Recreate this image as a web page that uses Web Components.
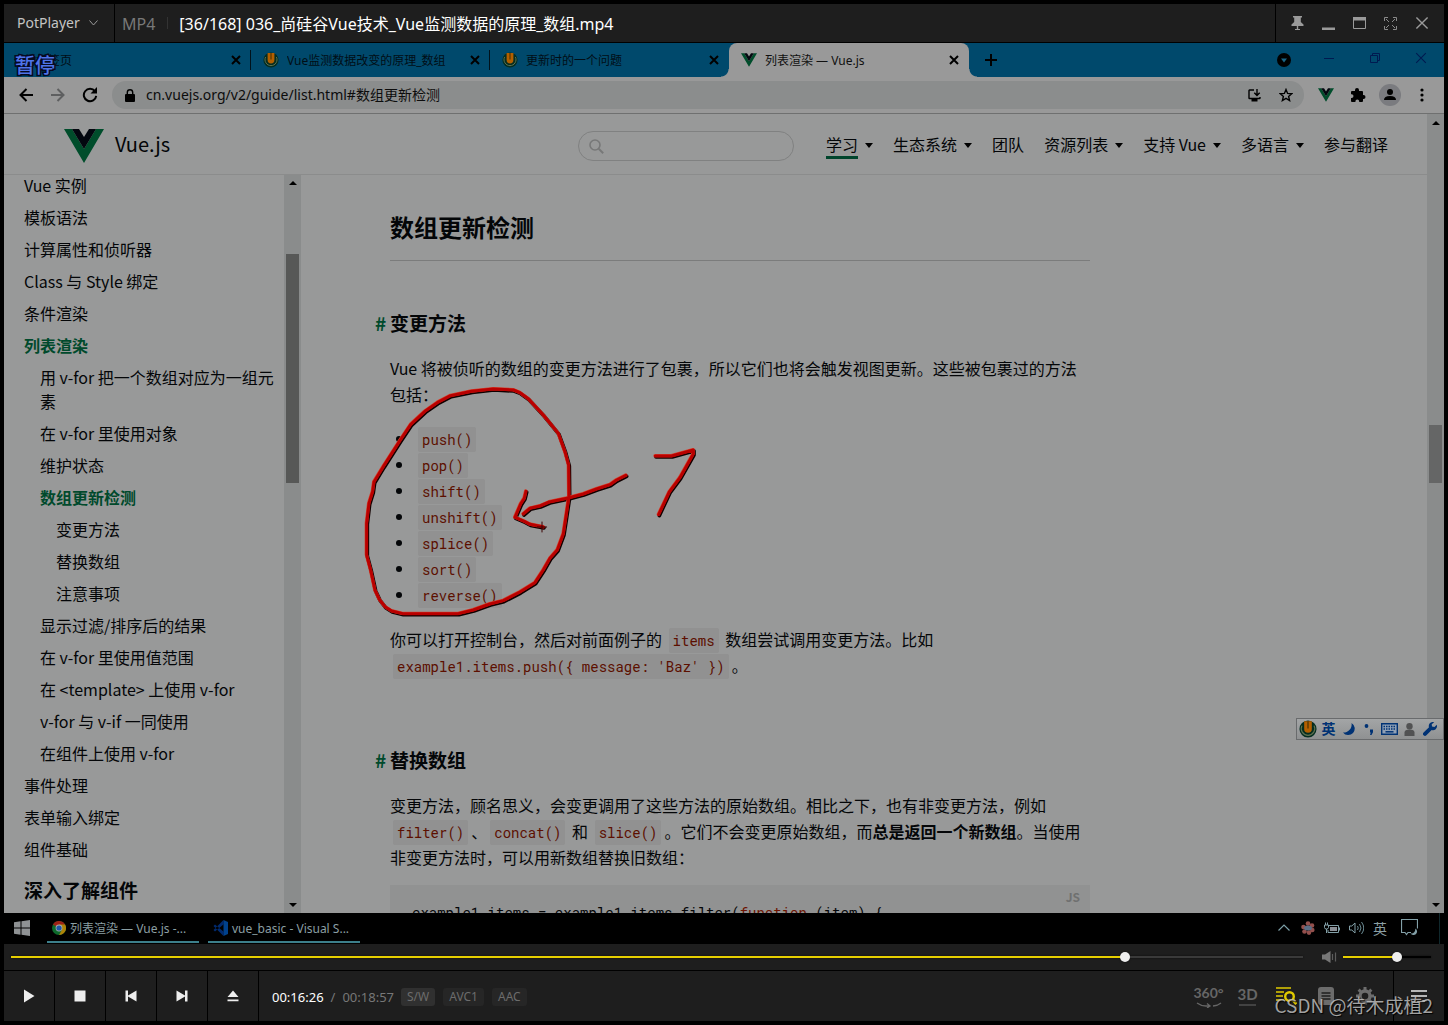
<!DOCTYPE html>
<html lang="zh-CN">
<head>
<meta charset="utf-8">
<title>PotPlayer</title>
<style>
  html, body { margin: 0; background: #000; }
  body { font-family: "Noto Sans CJK SC", sans-serif; }
</style>
</head>
<body>
<pot-window>
  <pot-titlebar slot="title" format="MP4">[36/168] 036_尚硅谷Vue技术_Vue监测数据的原理_数组.mp4</pot-titlebar>
  <browser-tabs>
    <browser-tab>新标签页</browser-tab>
    <browser-tab icon="u">Vue监测数据改变的原理_数组</browser-tab>
    <browser-tab icon="u">更新时的一个问题</browser-tab>
    <browser-tab icon="vue" active>列表渲染 — Vue.js</browser-tab>
  </browser-tabs>
  <browser-toolbar url="cn.vuejs.org/v2/guide/list.html#数组更新检测"></browser-toolbar>
  <vue-site></vue-site>
  <win-taskbar slot="taskbar">
    <task-button icon="chrome">列表渲染 — Vue.js -...</task-button>
    <task-button icon="code">vue_basic - Visual S...</task-button>
  </win-taskbar>
  <seek-bar slot="seek"></seek-bar>
  <player-controls slot="controls"></player-controls>
</pot-window>

<script>
const RESET = `
  *, *::before, *::after { box-sizing: border-box; }
  button { font: inherit; color: inherit; background: none; border: 0; padding: 0; margin: 0; display: flex; align-items: center; justify-content: center; }
  a { color: inherit; text-decoration: none; }
  input { font: inherit; color: inherit; background: none; border: 0; padding: 0; margin: 0; outline: 0; min-width: 0; }
  svg { display: block; flex: none; }
`;
const UI = '"Noto Sans", "Noto Sans CJK SC", sans-serif';

const svg = (w, h, body, box) =>
  `<svg width="${w}" height="${h}" viewBox="${box || `0 0 ${w} ${h}`}" aria-hidden="true">${body}</svg>`;

const ICON = {
  vue: (w, h) => svg(w, h, `<path fill="#004d2b" d="M0 0h8l12 20L32 0h8L20 34z"/><path fill="#03070f" d="M8 0h7l5 8 5-8h7L20 20z"/>`, '0 0 40 34'),
  u: (s) => svg(s, s, `<circle cx="8" cy="8" r="7.6" fill="#052d20"/><path d="M2.6 5a6 6 0 1 0 10.8 0" fill="none" stroke="#5d7250" stroke-width="1"/><path d="M4.6 1v7a3.4 3.4 0 0 0 6.8 0V1z" fill="#b35f00"/><path d="M8 1v6.5" stroke="#5c3a00" stroke-width="1.3"/>`, '0 0 16 16'),
  chrome: () => svg(14, 14, `<circle cx="7" cy="7" r="7" fill="#0d6a2c"/><path d="M7 7 .9 3.5A7 7 0 0 1 13.1 3.5z" fill="#9c2115"/><path d="M7 7V3.5h6.1A7 7 0 0 1 7 14l3-5.3z" fill="#ad8308"/><circle cx="7" cy="7" r="3.4" fill="#a9aaa9"/><circle cx="7" cy="7" r="2.6" fill="#1f57a8"/>`),
  code: () => svg(15, 16, `<path d="M10.5 0 15 2v12l-4.500 2z" fill="#00418c"/><path d="M11 4 2 11.5.5 10 10.5 0zM11 12 2 4.5.5 6l10 10z" fill="#002a6e"/>`),
  x: (s, c, w) => svg(s, s, `<path d="M1 1 9 9M9 1 1 9" stroke="${c}" stroke-width="${w}" fill="none"/>`, '0 0 10 10')
};

function define(name, css, html) {
  const template = document.createElement('template');
  customElements.define(name, class extends HTMLElement {
    constructor() {
      super();
      this.attachShadow({ mode: 'open' });
    }
    connectedCallback() {
      if (this.shadowRoot.childNodes.length) return;
      template.innerHTML = `<style>${RESET}${css}</style>${typeof html === 'function' ? html(this) : html}`;
      this.shadowRoot.append(template.content.cloneNode(true));
    }
  });
}

/* ---------- player shell ---------- */
define('pot-window', `
  :host { display: flex; flex-direction: column; height: 100vh; padding: 4px; box-sizing: border-box; background: #000; gap: 1px; }
  .screen { flex: 1; min-height: 0; display: flex; flex-direction: column; }
  .video { flex: 1; min-height: 0; display: flex; flex-direction: column; position: relative; overflow: hidden; background: #989898; }
  .osd { position: absolute; left: 11px; top: 9px; font-size: 20px; line-height: 26px; font-weight: 500; color: #4f74ea; -webkit-text-stroke: 3px #060a20; paint-order: stroke fill; }
`, `
  <slot name="title"></slot>
  <div class="screen">
    <div class="video"><slot></slot><div class="osd">暂停</div></div>
    <slot name="taskbar"></slot>
    <slot name="seek"></slot>
  </div>
  <slot name="controls"></slot>
`);

define('pot-titlebar', `
  :host { display: flex; height: 38px; background: #1e1e1e; font-family: ${UI}; color: #fff; }
  .brand { width: 111px; padding: 0 0 1px 13px; gap: 9px; justify-content: flex-start; border-right: 1px solid #000; color: #c4c4c4; font-size: 14px; }
  .format { padding: 2px 12px 0 7px; font-size: 16px; line-height: 36px; color: #787878; }
  .rule { width: 1px; height: 12px; background: #333; align-self: center; }
  .name { flex: 1; padding: 2px 0 0 11px; font-size: 16px; line-height: 36px; white-space: nowrap; overflow: hidden; }
  .controls { display: flex; border-left: 1px solid #000; padding: 0 7px 0 6px; }
  .controls button { width: 31px; }
`, el => `
  <button class="brand">PotPlayer ${svg(9, 6, '<path d="M.5.5 4.5 5l4-4.5" fill="none" stroke="#9a9a9a"/>')}</button>
  <span class="format">${el.getAttribute('format')}</span><span class="rule"></span>
  <span class="name"><slot></slot></span>
  <div class="controls">
    <button aria-label="pin">${svg(13, 14, '<path d="M2 0h9v1.500H9.800V6l2.700 2.500V10H.5V8.500L3.200 6V1.500H2zM5.800 10h1.400v3H9v1H4v-1h1.800z" fill="#9a9a9a"/>')}</button>
    <button aria-label="minimize">${svg(13, 14, '<path d="M0 11.5h13v2.500H0z" fill="#9a9a9a"/>')}</button>
    <button aria-label="maximize">${svg(13, 12, '<path d="M.5.5h12v11H.5z" fill="none" stroke="#9a9a9a"/><path d="M0 0h13v3.500H0z" fill="#9a9a9a"/>')}</button>
    <button aria-label="fullscreen">${svg(13, 13, '<path d="M.5 4V.5H4M9 .5h3.500V4M12.500 9v3.500H9M4 12.500H.5V9M2 2l3 3M11 2 8 5M11 11 8 8M2 11l3-3" fill="none" stroke="#8a8a8a"/>')}</button>
    <button aria-label="close">${ICON.x(14, '#9a9a9a', 1)}</button>
  </div>
`);

/* ---------- browser chrome ---------- */
define('browser-tabs', `
  :host { display: flex; align-items: stretch; height: 34px; padding-left: 8px; background: #00496c; font-family: ${UI}; flex: none; }
  .plus { width: 44px; }
  .fill { flex: 1; }
  .win { width: 46px; padding-bottom: 5px; }
  .more { width: 44px; }
`, `
  <slot></slot>
  <button class="plus" aria-label="new tab">${svg(12, 12, '<path d="M6 0v12M0 6h12" stroke="#000" stroke-width="2"/>')}</button>
  <span class="fill"></span>
  <button class="more" aria-label="search tabs">${svg(14, 14, '<circle cx="7" cy="7" r="7" fill="#000"/><path d="M4 5.500h6L7 9.500z" fill="#1a6688"/>')}</button>
  <button class="win" aria-label="minimize">${svg(10, 10, '<path d="M0 5.500h10" stroke="#001a50"/>')}</button>
  <button class="win" aria-label="restore">${svg(10, 10, '<path d="M.5 2.500h7v7h-7zM2.500 2.500v-2h7v7h-2" fill="none" stroke="#001a50"/>')}</button>
  <button class="win" aria-label="close">${ICON.x(12, '#001a50', 0.9)}</button>
`);

define('browser-tab', `
  :host { display: flex; align-items: center; gap: 8px; width: 239px; padding: 0 10px 0 12px; font-size: 12px; color: #000e16; position: relative; box-sizing: border-box; }
  :host(:not([active]))::after { content: ""; width: 1px; height: 20px; background: #00121c; position: absolute; right: 0; top: 7px; }
  :host(:nth-child(3))::after { display: none; }
  :host([active]) { background: #999; border-radius: 8px 8px 0 0; color: #101010; width: 240px; }
  :host([active])::before, :host([active])::after { content: ""; position: absolute; bottom: 0; width: 8px; height: 8px; right: 100%; top: auto; background: radial-gradient(circle at 0 0, #00496c 7px, #999 8px); }
  :host([active])::after { right: auto; left: 100%; background: radial-gradient(circle at 100% 0, #00496c 7px, #999 8px); }
  a { flex: 1; white-space: nowrap; overflow: hidden; line-height: 20px; padding-top: 2px; }
`, el => `
  ${el.getAttribute('icon') === 'vue' ? ICON.vue(16, 14) : el.getAttribute('icon') === 'u' ? ICON.u(16) : ''}
  <a href="#"><slot></slot></a>
  <button aria-label="close tab">${ICON.x(10, '#000', 2)}</button>
`);

define('browser-toolbar', `
  :host { display: flex; align-items: center; height: 37px; padding: 0 6px; background: #999; border-bottom: 1px solid #6f7070; font-family: ${UI}; flex: none; box-sizing: border-box; }
  .nav { width: 32px; height: 28px; }
  label { flex: 1; margin: 0 6px; display: flex; align-items: center; height: 28px; padding: 0 2px 0 13px; border-radius: 14px; background: #8b8d8d; gap: 11px; }
  label input { flex: 1; font-size: 14px; line-height: 20px; color: #0c0c0c; }
  label button { width: 32px; margin-left: -11px; height: 28px; }
  .avatar { width: 22px; height: 22px; border-radius: 11px; background: #7a7b7f; }
`, el => `
  <button class="nav" aria-label="back">${svg(14, 14, '<path d="M14 7H1.500M7.500 1l-6 6 6 6" fill="none" stroke="#000" stroke-width="2"/>')}</button>
  <button class="nav" aria-label="forward">${svg(14, 14, '<path d="M0 7h12.500M6.500 1l6 6-6 6" fill="none" stroke="#5e5f60" stroke-width="2"/>')}</button>
  <button class="nav" aria-label="reload">${svg(16, 16, '<path d="M13 4.300A6.200 6.200 0 1 0 14.200 8.800" fill="none" stroke="#000" stroke-width="2"/><path d="M15 0v6.500H8.500z"/>')}</button>
  <label>${svg(10, 13, '<path d="M1 5h8q1 0 1 1v6q0 1-1 1H1q-1 0-1-1V6q0-1 1-1z"/><path d="M2.300 5.500V3.500a2.700 2.700 0 0 1 5.400 0v2" fill="none" stroke="#000" stroke-width="1.400"/>')}
    <input aria-label="address" value="${el.getAttribute('url')}">
    <button aria-label="install">${svg(13, 13, '<path d="M6 1H1.500Q1 1 1 1.500v7.500q0 .5.5.5h10q.5 0 .5-.5V8M9 0v6M6.300 3.800 9 6.500l2.700-2.700" fill="none" stroke="#000" stroke-width="1.400"/><path d="M3.500 10h6v2.500h-6z"/>')}</button>
    <button aria-label="bookmark">${svg(14, 14, '<path d="m7 1.500 1.600 3.900 4.200.3-3.200 2.700 1 4.100L7 10.300l-3.600 2.200 1-4.100L1.200 5.700l4.200-.3z" fill="none" stroke="#000" stroke-width="1.400"/>')}</button>
  </label>
  <button class="nav" aria-label="Vue devtools">${ICON.vue(16, 14)}</button>
  <button class="nav" aria-label="extensions">${svg(16, 16, '<path d="M1 5q0-1 1-1h3V3a2 2 0 0 1 4 0v1h3q1 0 1 1v3h.5a2 2 0 0 1 0 4H13v2q0 1-1 1H9.200v-.6a1.900 1.900 0 0 0-3.800 0v.6H2q-1 0-1-1v-3h.6a1.900 1.900 0 0 0 0-3.800H1z"/>')}</button>
  <button class="nav" aria-label="profile"><span class="avatar">${svg(22, 22, '<circle cx="11" cy="8" r="3"/><path d="M5 16q0-4 6-4t6 4z"/>')}</span></button>
  <button class="nav" aria-label="menu">${svg(4, 14, '<circle cx="2" cy="2" r="1.600"/><circle cx="2" cy="7" r="1.600"/><circle cx="2" cy="12" r="1.600"/>')}</button>
`);

/* ---------- web page ---------- */
define('scroll-bar', `
  :host { display: flex; flex-direction: column; align-items: center; width: 17px; flex: none; background: #8a8c8c; }
  span { height: 17px; display: flex; align-items: center; }
  .track { flex: 1; align-self: stretch; display: flex; flex-direction: column; padding: 0 2px; }
  .before { flex: var(--before); } .thumb { flex: var(--thumb); background: var(--thumb-color, #575857); } .after { flex: var(--after); }
`, `
  <span>${svg(8, 4, '<path d="M0 4h8L4 0z"/>')}</span>
  <div class="track"><i class="before"></i><i class="thumb"></i><i class="after"></i></div>
  <span>${svg(8, 4, '<path d="M0 0h8L4 4z"/>')}</span>
`);

define('vue-site', `
  :host { flex: 1; min-height: 0; display: flex; position: relative; background: #989999; color: #040608; }
  .page { flex: 1; min-width: 0; display: flex; flex-direction: column; }
  .body { flex: 1; min-height: 0; display: flex; }
  .outer { --before: 294; --thumb: 58; --after: 413; --thumb-color: #656666; }
  .inner { --before: 63; --thumb: 229; --after: 413; }
`, `
  <div class="page">
    <vue-header></vue-header>
    <div class="body"><vue-sidebar></vue-sidebar><scroll-bar class="inner"></scroll-bar><vue-article></vue-article></div>
  </div>
  <scroll-bar class="outer"></scroll-bar>
  <ink-layer></ink-layer>
  <ime-bar></ime-bar>
`);

define('vue-header', `
  :host { display: flex; align-items: center; height: 60px; padding: 0 39px 0 60px; box-shadow: 0 1px #8b8c8c; flex: none; z-index: 1; }
  .logo { display: flex; align-items: center; gap: 11px; font-size: 20px; line-height: 32px; padding-top: 4px; }
  .logo span { padding-bottom: 4px; }
  .fill { flex: 1; }
  label { display: flex; align-items: center; width: 216px; height: 30px; margin: 4px 32px 0 0; padding: 0 12px 0 10px; gap: 8px; border: 1px solid #808181; border-radius: 15px; }
  label input { flex: 1; font-size: 14px; }
  nav { display: flex; gap: 20px; }
`, `
  <a class="logo" href="#">${ICON.vue(40, 34)}<span>Vue.js</span></a>
  <span class="fill"></span>
  <label>${svg(15, 15, '<circle cx="6" cy="6" r="5" fill="none" stroke="#777878" stroke-width="1.600"/><path d="m9.700 9.700 4.500 4.500" stroke="#777878" stroke-width="2"/>')}<input type="search" aria-label="search"></label>
  <nav>
    <nav-item current menu>学习</nav-item><nav-item menu>生态系统</nav-item><nav-item>团队</nav-item>
    <nav-item menu>资源列表</nav-item><nav-item menu>支持 Vue</nav-item><nav-item menu>多语言</nav-item><nav-item>参与翻译</nav-item>
  </nav>
`);

define('nav-item', `
  :host { display: block; font-size: 16px; line-height: 24px; white-space: nowrap; }
  a { display: flex; align-items: center; gap: 7px; }
  span { padding: 2px 0 0; border-bottom: 3px solid transparent; }
  :host([current]) span { border-color: #00452c; }
  svg { margin-top: 2px; }
`, el => `<a href="#"><span><slot></slot></span>${el.hasAttribute('menu') ? svg(8, 5, '<path d="M0 0h8L4 5z"/>') : ''}</a>`);

const MENU = [
  [0, 'Vue 实例'], [0, '模板语法'], [0, '计算属性和侦听器'], [0, 'Class 与 Style 绑定'], [0, '条件渲染'], [0, '列表渲染', 1],
  [1, '用 v-for 把一个数组对应为一组元素'], [1, '在 v-for 里使用对象'], [1, '维护状态'], [1, '数组更新检测', 1],
  [2, '变更方法'], [2, '替换数组'], [2, '注意事项'],
  [1, '显示过滤/排序后的结果'], [1, '在 v-for 里使用值范围'], [1, '在 &lt;template&gt; 上使用 v-for'], [1, 'v-for 与 v-if 一同使用'], [1, '在组件上使用 v-for'],
  [0, '事件处理'], [0, '表单输入绑定'], [0, '组件基础']
];
define('vue-sidebar', `
  :host { display: block; width: 280px; flex: none; padding: 0 8px 0 20px; overflow: hidden; box-sizing: border-box; font-size: 16px; line-height: 24px; }
  ul { list-style: none; margin: -1px 0 0; padding: 0; }
  li { margin-bottom: 8px; }
  .l1 { padding-left: 16px; } .l2 { padding-left: 32px; }
  .on { font-weight: 700; color: #004a2c; }
  h3 { margin: 17px 0 0; font-size: 19px; line-height: 24px; }
`, `<ul>${MENU.map(([l, t, on]) => `<li class="l${l}${on ? ' on' : ''}"><a href="#">${t}</a></li>`).join('')}</ul><h3>深入了解组件</h3>`);

define('vue-article', `
  :host { display: block; flex: 1; min-width: 0; overflow: hidden; padding: 37px 24px 0 89px; font-size: 16px; line-height: 26px; }
  article { max-width: 700px; }
  h2 { margin: 0 0 49px; padding-bottom: 17px; border-bottom: 1px solid #7b7c7c; font-size: 24px; line-height: 32px; }
  h3 { margin: 0 0 19px -15px; font-size: 19px; line-height: 26px; display: flex; }
  h3 a { width: 15px; color: #004a2c; }
  section + section { margin-top: 69px; }
  p { margin: 0; }
  ul { margin: 18px 0 19px; padding-left: 25px; }
  code, pre { font-family: "Roboto Mono", "Liberation Mono", monospace; font-size: 14px; }
  p code, li code { color: #5c0f00; background: #919191; padding: 3px 4px; margin: 0 3px; border-radius: 2px; white-space: nowrap; line-height: 16px; }
  .block { margin-top: 15px; background: #919292; position: relative; padding: 16px 22px; }
  pre { margin: 0; line-height: 24px; }
  .block small { position: absolute; right: 10px; top: 3px; font-size: 12px; line-height: 18px; font-weight: 700; color: #6f7070; }
  .kw { color: #6d1200; }
`, `
  <article>
    <h2>数组更新检测</h2>
    <section>
      <h3><a href="#">#</a>变更方法</h3>
      <p>Vue 将被侦听的数组的变更方法进行了包裹，所以它们也将会触发视图更新。这些被包裹过的方法包括：</p>
      <ul>${['push', 'pop', 'shift', 'unshift', 'splice', 'sort', 'reverse'].map(n => `<li><code>${n}()</code></li>`).join('')}</ul>
      <p>你可以打开控制台，然后对前面例子的 <code>items</code> 数组尝试调用变更方法。比如 <code>example1.items.push({ message: 'Baz' })</code>。</p>
    </section>
    <section>
      <h3><a href="#">#</a>替换数组</h3>
      <p>变更方法，顾名思义，会变更调用了这些方法的原始数组。相比之下，也有非变更方法，例如 <code>filter()</code>、<code>concat()</code> 和 <code>slice()</code>。它们不会变更原始数组，而<strong>总是返回一个新数组</strong>。当使用非变更方法时，可以用新数组替换旧数组：</p>
      <div class="block"><small>JS</small><pre>example1.items = example1.items.filter(<span class="kw">function</span> (item) {</pre></div>
    </section>
  </article>
`);

/* freehand strokes drawn over the video */
define('ink-layer', `
  :host { position: absolute; left: 346px; top: 176px; pointer-events: none; }
`, (() => {
  const strokes = `
    <path d="M490 300 430 297 365 304 302 317 262 338 225 364 182 404 150 452 100 530 72 576 68 605 57 640 50 700 50 795 62 840 75 900 88 928 105 950 125 963 158 971 325 971 370 960 420 942 460 932 510 906 555 878 580 840 600 805 622 780 640 732 648 680 657 620 656 525 645 485 625 430 580 375 535 326 510 308z"/>
    <path d="M828 556 800 570 780 584 740 597 700 612 655 624 598 636 570 648 540 655 520 672M528 604 523 625 512 642 495 682 523 694 540 703 580 711M916 498 965 498 1030 480 1030 492 990 563 958 606 926 674"/>`;
  return svg(380, 340, `
    <g fill="none" stroke-linecap="round" stroke-linejoin="round">
      <g stroke="#120000" stroke-width="11" transform="translate(2 3)">${strokes}</g>
      <g stroke="#d8402c" stroke-width="10" transform="translate(-1 -1)">${strokes}</g>
      <g stroke="#b90000" stroke-width="9">${strokes}</g>
      <path d="M576 696v30M562 711h28" stroke="#3a0000" stroke-width="3"/>
    </g>`, '0 0 1140 1020');
})());

define('ime-bar', `
  :host { position: absolute; right: 0; bottom: 173px; display: flex; align-items: center; height: 22px; width: 148px; border: 1px solid #696b6d; background: linear-gradient(#a3a5a6, #8f9192); padding: 0 3px 0 1px; box-sizing: border-box; font-family: ${UI}; }
  button { flex: 1; height: 20px; color: #003274; font-size: 14px; line-height: 20px; font-weight: 700; }
`, `
  <button aria-label="input method">${ICON.u(18)}</button>
  <button>英</button>
  <button aria-label="half width">${svg(14, 14, '<path d="M9.500 1A6.500 6.500 0 1 1 1 10.500 8 8 0 0 0 9.500 1z" fill="#003274"/>')}</button>
  <button aria-label="punctuation">${svg(10, 12, '<circle cx="2.500" cy="3" r="1.900" fill="#003274"/><path d="M6 6.500h3v2.700L7.500 12H6l.8-2.500H6z" fill="#003274"/>')}</button>
  <button aria-label="keyboard">${svg(17, 12, '<path d="M.7.7h15.600v10.600H.7z" fill="#8fa0b5" stroke="#003274" stroke-width="1.400"/><path d="M2.500 3.500h12M2.500 6h12" stroke="#003274" stroke-width="1.500" stroke-dasharray="1.500 1"/><path d="M4.500 8.800h8" stroke="#003274" stroke-width="1.500"/>')}</button>
  <button aria-label="account">${svg(11, 13, '<circle cx="5.500" cy="3.200" r="3.200" fill="#515253"/><path d="M.5 13V9.500q0-3 5-3t5 3V13z" fill="#515253"/>')}</button>
  <button aria-label="settings">${svg(14, 14, '<path d="M10 0a4 4 0 0 0-4 5.300L.6 10.500a1.800 1.800 0 0 0 2.800 2.800L8.700 8A4 4 0 0 0 14 4l-.3-1.300L11.500 5 9 4.500 8.700 2.300 11.200.2z" fill="#003274"/>')}</button>
`);

/* ---------- taskbar ---------- */
define('win-taskbar', `
  :host { display: flex; height: 31px; flex: none; background: #000; font-family: ${UI}; color: #8b9fa3; padding-right: 4px; }
  .start { width: 35px; margin-right: 8px; padding-bottom: 1px; }
  ::slotted(*) { margin-right: 9px; }
  .fill { flex: 1; }
  .tray { display: flex; border-right: 1px solid #10282c; padding-right: 12px; }
  .tray button { width: 24px; font-size: 14px; padding-bottom: 2px; }
  .tray .wide { width: 35px; }
`, `
  <button class="start" aria-label="start">${svg(16, 16, '<path d="M0 2.300 6.500 1.300v6.200H0zM7.500 1.200 16 0v7.500H7.500zM0 8.500h6.500v6.200L0 13.700zM7.500 8.500H16V16l-8.500-1.200z" fill="#8f9294"/>')}</button>
  <slot></slot><span class="fill"></span>
  <div class="tray">
    <button aria-label="show hidden icons">${svg(12, 7, '<path d="M.5 6.500 6 1l5.500 5.500" fill="none" stroke="#7da0a8" stroke-width="1.200"/>')}</button>
    <button aria-label="cloud">${svg(14, 14, '<g fill="#93504d"><circle cx="7" cy="2.500" r="2.300"/><circle cx="11" cy="4.500" r="2.300"/><circle cx="11.300" cy="9" r="2.300"/><circle cx="8" cy="11.600" r="2.300"/><circle cx="3.500" cy="10.500" r="2.300"/><circle cx="2.500" cy="6" r="2.300"/></g><ellipse cx="7" cy="7" rx="4" ry="2.500" fill="#5a6d85"/>')}</button>
    <button aria-label="battery">${svg(16, 12, '<path d="M5 3.500h9.500v7H4V8M15.500 5.500v3M.5 3h4v2.500q0 1.500-2 1.500t-2-1.500zM1.500 3V.5M3.500 3V.5M2.500 7v4" fill="none" stroke="#83a0a8"/><path d="M6 5h7v4H6z" fill="#8b8f96"/>')}</button>
    <button aria-label="volume">${svg(15, 14, '<path d="M.5 5h2.300L6 2v10L2.800 9H.5z" fill="none" stroke="#83a0a8"/><path d="M8.500 5q1.500 2 0 4M10.500 3q3 4 0 8M12.500 1q4.500 6 0 12" fill="none" stroke="#6b8b93"/>')}</button>
    <button>英</button>
    <button class="wide" aria-label="notifications">${svg(17, 17, '<path d="M10 13.500H7l-1.500 2-1.500-2H.5V.5h16v9" fill="none" stroke="#83a0a8" stroke-width="1.200"/><path d="M14.500 9.500a3.600 3.600 0 1 1-5 5q4.500.5 5-5z" fill="#83a0a8"/>')}</button>
  </div>
`);

define('task-button', `
  :host { display: block; width: 152px; height: 30px; border-bottom: 2px solid #3c7f8b; box-sizing: border-box; font-size: 12px; line-height: 18px; }
  button { width: 100%; height: 100%; justify-content: flex-start; gap: 4px; padding: 2px 0 0 5px; white-space: nowrap; overflow: hidden; }
  span { padding-top: 1px; }
`, el => `<button>${ICON[el.getAttribute('icon')]()}<span><slot></slot></span></button>`);

/* ---------- seek and transport ---------- */
define('seek-bar', `
  :host { display: flex; align-items: center; height: 26px; flex: none; background: #1e1e1e; padding: 0 13px 0 7px; }
  input { appearance: none; height: 12px; background: linear-gradient(90deg, #e6cf00 var(--at), var(--rest) var(--at)) center / 100% 2px no-repeat; filter: drop-shadow(0 0 1px #0008); }
  input::-webkit-slider-thumb { appearance: none; width: 10px; height: 10px; border-radius: 5px; background: #eee; }
  .seek { flex: 1; --at: 86%; --rest: #3a3a3a; }
  .vol { width: 88px; --at: 62%; --rest: #000; }
  button { width: 16px; margin: 0 6px 0 18px; }
`, `
  <input class="seek" type="range" min="0" max="1000" value="865" aria-label="position">
  <button aria-label="mute">${svg(15, 12, '<path d="M0 3.500h3L8.500 0v12L3 8.500H0z" fill="#777"/><path d="M10.500 3v6M13.500 1.500v9" stroke="#5c5c5c" stroke-width="1.200"/>')}</button>
  <input class="vol" type="range" min="0" max="1000" value="628" aria-label="volume">
`);

define('player-controls', `
  :host { display: flex; height: 50px; flex: none; background: #1e1e1e; font-family: ${UI}; position: relative; font-size: 13px; line-height: 18px; color: #777; }
  .transport { display: flex; }
  .transport button { width: 51px; border-right: 1px solid #000; }
  .time { display: flex; align-items: center; gap: 7px; padding: 2px 0 0 13px; }
  .time b { font-weight: 400; color: #fff; }
  .time em { font-style: normal; font-size: 12px; background: #262626; border-radius: 3px; padding: 0 6px; margin-right: 1px; color: #6c6c6c; }
  .time em:first-of-type { background: #303030; }
  .fill { flex: 1; }
  .tools { display: flex; padding-right: 9px; border-right: 1px solid #000; }
  .tools button { width: 39px; flex-direction: column; font-family: Lato, sans-serif; font-weight: 700; font-size: 14px; line-height: 15px; color: #666; gap: 2px; }
  .tools .big { font-size: 15px; }
  .burger { width: 50px; }
  .mark { position: absolute; right: 11px; bottom: 3px; font: 19px/26px "Noto Sans CJK SC", sans-serif; color: #c4c4c4d0; text-shadow: 1px 1px 1px #000; white-space: nowrap; }
`, `
  <div class="transport">
    <button aria-label="play">${svg(12, 14, '<path d="M1 .5v13L11.500 7z" fill="#eee"/>')}</button>
    <button aria-label="stop">${svg(12, 12, '<path d="M.5.5h11v11H.5z" fill="#eee"/>')}</button>
    <button aria-label="previous">${svg(12, 12, '<path d="M.5.5h2.500v5L11.500.5v11L3 6.500v5H.5z" fill="#eee"/>')}</button>
    <button aria-label="next">${svg(12, 12, '<path d="M11.500.5H9v5L.5.5v11L9 6.500v5h2.500z" fill="#eee"/>')}</button>
    <button aria-label="open">${svg(12, 12, '<path d="M.5 7h11L6 .5zM.5 9.500h11v1.700H.5z" fill="#eee"/>')}</button>
  </div>
  <div class="time"><b>00:16:26</b><span>/</span><span>00:18:57</span><em>S/W</em><em>AVC1</em><em>AAC</em></div>
  <span class="fill"></span>
  <div class="tools">
    <button><span>360°</span>${svg(26, 6, '<path d="M1 1q4 3 9 3h3M25 1q-3 2.500-8 3M11 1.500 14 4l-3 2" fill="none" stroke="#666" stroke-width="1.300"/>')}</button>
    <button class="big"><span>3D</span>${svg(17, 2, '<path d="M0 1h17" stroke="#666"/>')}</button>
    <button aria-label="find">${svg(21, 18, '<path d="M0 1h15M0 5h8M0 9h7M0 13h8" stroke="#e0ca00" stroke-width="1.400"/><circle cx="13.500" cy="9.500" r="4.300" fill="none" stroke="#e0ca00" stroke-width="2.400"/><path d="m16.500 12.500 4 4.500" stroke="#e0ca00" stroke-width="3"/>')}</button>
    <button aria-label="playlist">${svg(16, 18, '<rect width="16" height="18" rx="3" fill="#6c6c6c"/><path d="M3.500 6h9M3.500 9h9M3.500 12h9" stroke="#1e1e1e" stroke-width="1.400"/>')}</button>
    <button aria-label="preferences">${svg(18, 18, '<circle cx="9" cy="9" r="5" fill="none" stroke="#6c6c6c" stroke-width="3.400"/><path d="M9 0v3M9 15v3M0 9h3M15 9h3M2.600 2.600l2.200 2.200M13.200 13.200l2.200 2.200M15.400 2.600l-2.200 2.200M4.800 13.200l-2.200 2.200" stroke="#6c6c6c" stroke-width="3"/>')}</button>
  </div>
  <button class="burger" aria-label="menu">${svg(16, 12, '<path d="M0 1h16M0 6h16M0 11h16" stroke="#e8e8e8" stroke-width="1.600"/>')}</button>
  <div class="mark">CSDN @待木成植2</div>
`);
</script>
</body>
</html>
